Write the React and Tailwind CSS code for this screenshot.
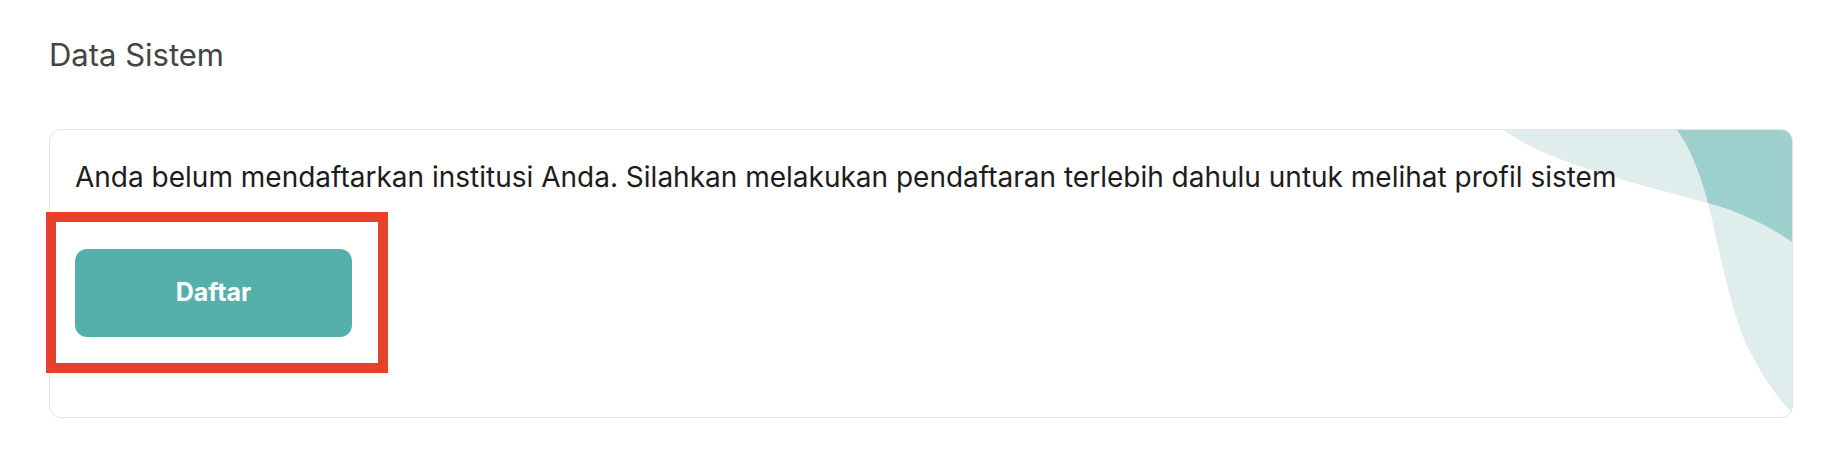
import React from 'react';

function Gelombang() {
  // hiasan sudut kanan atas kartu
  return (
    <svg className="absolute top-0 right-0" width="300" height="288" viewBox="0 0 300 288" fill="none">
      <path d="M12 0 C50 28, 110 45, 216 73 C250 82, 280 98, 300 112 L300 0 Z" fill="#dfeeed" />
      <path d="M185 0 C200 20, 210 50, 216 73 C230 130, 240 190, 260 225 C272 250, 288 270, 300 283 L300 0 Z" fill="#dfeeed" />
      <path d="M185 0 C200 20, 210 50, 216 73 C250 82, 280 98, 300 112 L300 0 Z" fill="#9dd0cc" />
    </svg>
  );
}

export default function App() {
  return (
    <div className="relative w-[1844px] h-[468px] bg-white pl-[49px] pr-[51px] pt-[35px] font-['Inter',sans-serif]">
      <h2 className="text-[31px] leading-[40px] text-[#444444] font-normal">Data Sistem</h2>

      <div className="relative mt-[54px] border border-[#e4e4e4] rounded-[12px] overflow-hidden bg-white px-[25px] pt-[27px] pb-[80px]">
        <Gelombang />
        <p className="relative text-[28px] leading-[40px] text-[#1c1c1c]">
          Anda belum mendaftarkan institusi Anda. Silahkan melakukan pendaftaran terlebih dahulu untuk melihat profil sistem
        </p>
        <button className="relative mt-[52px] w-[277px] h-[88px] rounded-[12px] bg-[#55b0ac] text-white text-[25px] font-bold">
          Daftar
        </button>
      </div>

      {/* kotak penanda merah */}
      <div className="absolute left-[46px] top-[212px] w-[342px] h-[161px] border-[10px] border-[#e8412b]" />
    </div>
  );
}
